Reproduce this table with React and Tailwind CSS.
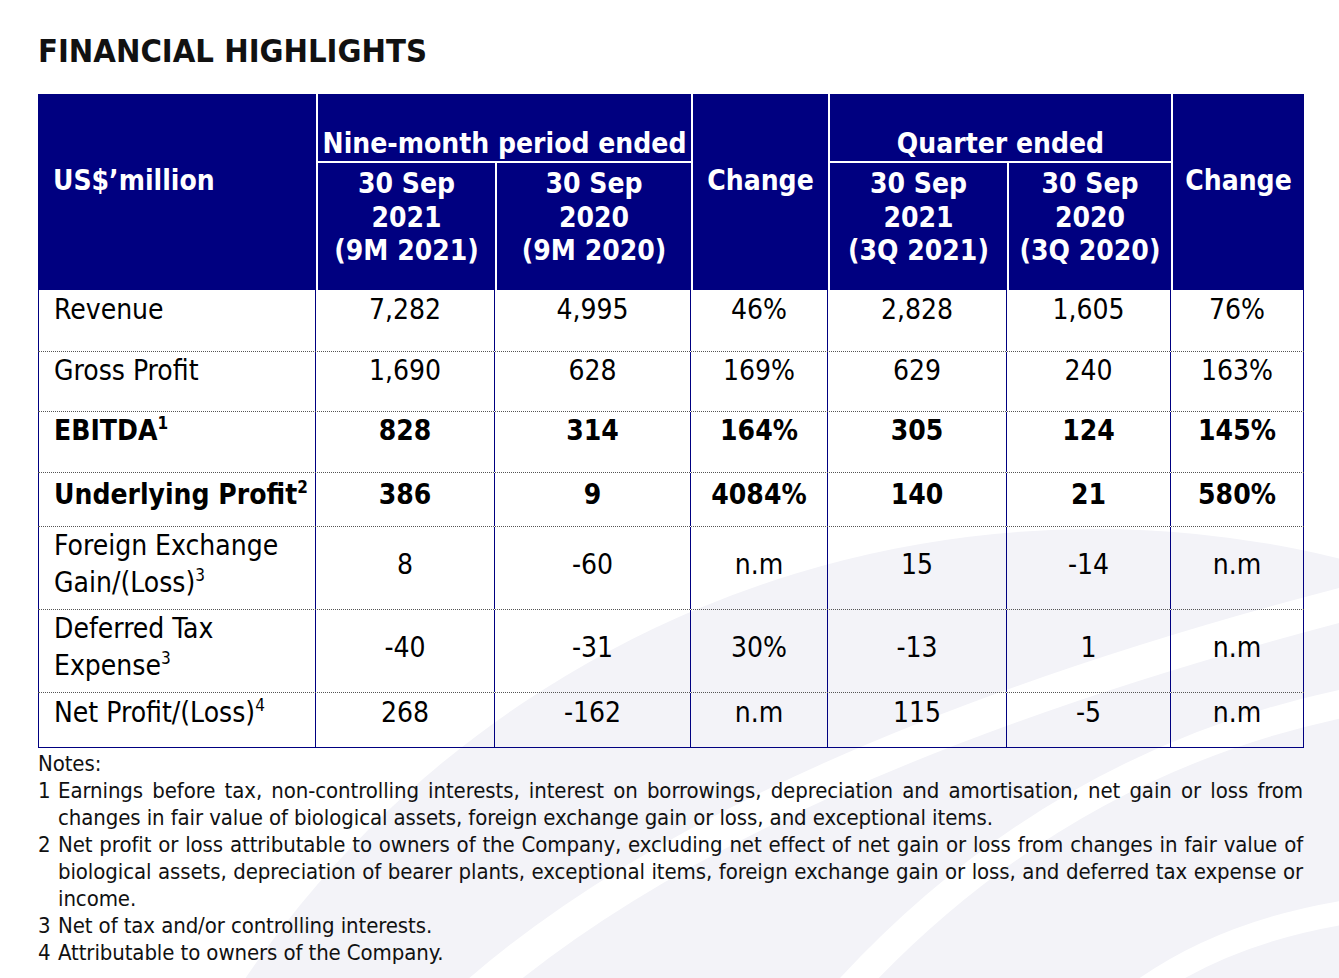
import React from "react";

const font = { fontFamily: "'DejaVu Sans Condensed', 'DejaVu Sans', sans-serif" };

const cols = "grid w-[1266px] grid-cols-[278px_179px_196px_137px_179px_164px_133px]";

const rows = [
  { label: ["Revenue"], values: ["7,282", "4,995", "46%", "2,828", "1,605", "76%"], h: "h-[62px]", pt: "pt-[1px]" },
  { label: ["Gross Profit"], values: ["1,690", "628", "169%", "629", "240", "163%"], h: "h-[60px]", pt: "pt-[0px]" },
  { label: ["EBITDA"], sup: "1", bold: true, values: ["828", "314", "164%", "305", "124", "145%"], h: "h-[61px]", pt: "pt-[0px]" },
  { label: ["Underlying Profit"], sup: "2", bold: true, values: ["386", "9", "4084%", "140", "21", "580%"], h: "h-[54px]", pt: "pt-[3px]" },
  { label: ["Foreign Exchange", "Gain/(Loss)"], sup: "3", values: ["8", "-60", "n.m", "15", "-14", "n.m"], h: "h-[83px]", pt: "pt-[0px]" },
  { label: ["Deferred Tax", "Expense"], sup: "3", values: ["-40", "-31", "30%", "-13", "1", "n.m"], h: "h-[83px]", pt: "pt-[0px]" },
  { label: ["Net Profit/(Loss)"], sup: "4", values: ["268", "-162", "n.m", "115", "-5", "n.m"], h: "h-[55px]", pt: "pt-[1px]", last: true },
];

const notes = [
  {
    n: "1",
    lines: [
      "Earnings before tax, non-controlling interests, interest on borrowings, depreciation and amortisation, net gain or loss from",
      "changes in fair value of biological assets, foreign exchange gain or loss, and exceptional items.",
    ],
  },
  {
    n: "2",
    lines: [
      "Net profit or loss attributable to owners of the Company, excluding net effect of net gain or loss from changes in fair value of",
      "biological assets, depreciation of bearer plants, exceptional items, foreign exchange gain or loss, and deferred tax expense or",
      "income.",
    ],
  },
  { n: "3", lines: ["Net of tax and/or controlling interests."] },
  { n: "4", lines: ["Attributable to owners of the Company."] },
];

// faint watermark swooshes behind the table
function Backdrop() {
  return (
    <svg className="absolute inset-0 z-0" width="1339" height="978" viewBox="0 0 1339 978">
      <circle cx="1095" cy="1557" r="1028" fill="#f3f3f8" />
      <path d="M 470 1000 Q 740 760 1360 600" fill="none" stroke="#ffffff" strokeWidth="34" />
      <path d="M 830 1010 Q 1050 760 1360 700" fill="none" stroke="#ffffff" strokeWidth="28" />
      <path d="M 1130 1000 Q 1220 930 1360 910" fill="none" stroke="#ffffff" strokeWidth="24" />
    </svg>
  );
}

function HeaderCell({ className, children }) {
  return <div className={"text-white font-bold text-[28px] " + className}>{children}</div>;
}

export default function App() {
  return (
    <div className="relative w-[1339px] h-[978px] overflow-hidden bg-white text-black" style={font}>
      <Backdrop />
      <div className="relative z-10 pl-[38px]">
        <h1 className="mt-[32px] h-[38px] leading-[38px] text-[32.5px] font-bold text-[#111]">FINANCIAL HIGHLIGHTS</h1>

        <div className={cols + " mt-[24px] grid-rows-[69px_127px] bg-[#000080]"}>
          <HeaderCell className="row-span-2 pl-[15px] pt-[70px] leading-[34px]">US$’million</HeaderCell>
          <HeaderCell className="col-span-2 border-l-2 border-b-2 border-white flex items-end justify-center leading-[34px]">
            Nine-month period ended
          </HeaderCell>
          <HeaderCell className="row-span-2 border-l-2 border-white text-center pt-[70px] leading-[34px]">Change</HeaderCell>
          <HeaderCell className="col-span-2 border-l-2 border-b-2 border-white flex items-end justify-center leading-[34px]">
            Quarter ended
          </HeaderCell>
          <HeaderCell className="row-span-2 border-l-2 border-white text-center pt-[70px] leading-[34px]">Change</HeaderCell>
          <HeaderCell className="col-start-2 row-start-2 border-l-2 border-white text-center pt-[4px] leading-[33.5px]">
            30 Sep<br />2021<br />(9M 2021)
          </HeaderCell>
          <HeaderCell className="col-start-3 row-start-2 border-l-2 border-white text-center pt-[4px] leading-[33.5px]">
            30 Sep<br />2020<br />(9M 2020)
          </HeaderCell>
          <HeaderCell className="col-start-5 row-start-2 border-l-2 border-white text-center pt-[4px] leading-[33.5px]">
            30 Sep<br />2021<br />(3Q 2021)
          </HeaderCell>
          <HeaderCell className="col-start-6 row-start-2 border-l-2 border-white text-center pt-[4px] leading-[33.5px]">
            30 Sep<br />2020<br />(3Q 2020)
          </HeaderCell>
        </div>

        {rows.map((r) => (
          <div
            key={r.label[0]}
            className={
              cols +
              " text-[28px] leading-[37px] " +
              r.h +
              (r.last ? " border-b border-[#000080]" : " border-b border-dotted border-[#555]") +
              (r.bold ? " font-bold" : "")
            }
          >
            <div className={"border-l border-r border-[#000080] pl-[15px] " + r.pt}>
              {r.label.map((l, i) => (
                <div key={l}>
                  {l}
                  {i === r.label.length - 1 && r.sup ? <sup className="text-[17px] -top-[11px]">{r.sup}</sup> : null}
                </div>
              ))}
            </div>
            {r.values.map((v, i) => (
              <div key={i} className={"border-r border-[#000080] " + r.pt}>
                <div className={"flex items-center justify-center " + (r.label.length > 1 ? "h-[74px]" : "h-[37px]")}>
                  {v}
                </div>
              </div>
            ))}
          </div>
        ))}

        <div className="mt-[2px] w-[1266px] text-[22px] leading-[27px] tracking-[-0.1px] text-[#111]">
          <div>Notes:</div>
          {notes.map((note) => (
            <div key={note.n} className="flex">
              <div className="w-[20px] shrink-0">{note.n}</div>
              <div className="w-[1245px]">
                {note.lines.map((line, i) => (
                  <div
                    key={i}
                    className={
                      "whitespace-nowrap " +
                      (i < note.lines.length - 1 ? "text-justify [text-align-last:justify]" : "")
                    }
                  >
                    {line}
                  </div>
                ))}
              </div>
            </div>
          ))}
        </div>
      </div>
    </div>
  );
}
